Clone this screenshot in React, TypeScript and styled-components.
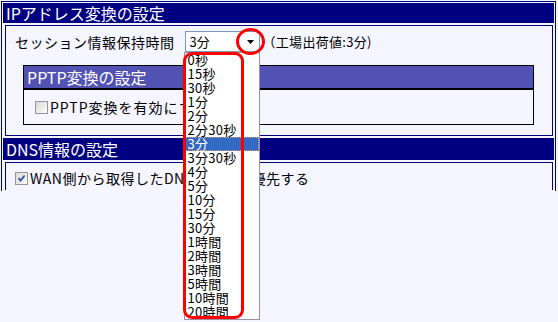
import styled, { createGlobalStyle } from "styled-components";

const GlobalStyle = createGlobalStyle`
  html, body {
    margin: 0;
    padding: 0;
    background: #f5f5ff;
  }
  body {
    font-family: "Noto Sans CJK JP", "Noto Sans", sans-serif;
    color: #000;
  }
`;

const Page = styled.div`
  width: 558px;
  height: 322px;
  overflow: hidden;
  box-sizing: border-box;
  padding: 1px 0 0 1px;
  background: #f5f5ff;
`;

const Frame = styled.div`
  width: 555px;
  height: 190px;
  box-sizing: border-box;
  border: 1px solid #000080;
  border-bottom: none;
  padding: 1px;
  display: flex;
  flex-direction: column;
  gap: 2px;
`;

const SectionTitle = styled.div<{ $h: number }>`
  height: ${(p) => p.$h}px;
  line-height: ${(p) => p.$h}px;
  background: #000080;
  color: #fff;
  font-size: 16px;
  padding-left: 3px;
  white-space: nowrap;
  flex: none;
`;

const SectionBody = styled.div<{ $open?: boolean }>`
  margin: 0 1px 0 2px;
  border: 1px solid #000080;
  border-bottom: ${(p) => (p.$open ? "none" : "1px solid #000080")};
  flex: ${(p) => (p.$open ? 1 : "none")};
  padding: ${(p) => (p.$open ? "8px 0 0 9px" : "5px 0 10px 0")};
`;

const Row = styled.div`
  display: flex;
  align-items: center;
  height: 21px;
  padding-left: 9px;
  font-size: 14px;
  letter-spacing: 0.5px;
  white-space: nowrap;
`;

const SelectWrap = styled.div`
  position: relative;
  margin-left: 10px;
  height: 21px;
`;

const Select = styled.div`
  width: 75px;
  height: 21px;
  box-sizing: border-box;
  border: 1px solid #7f9db9;
  background: #fff;
  font-size: 13px;
  letter-spacing: 0;
  line-height: 19px;
  padding: 0 5px 0 4px;
  display: flex;
  align-items: center;
  justify-content: space-between;
`;

const Note = styled.span`
  margin-left: 3px;
  font-size: 13px;
  letter-spacing: 0.3px;
`;

const DropList = styled.ul`
  position: absolute;
  top: 21px;
  left: -1px;
  width: 76px;
  height: 268px;
  box-sizing: border-box;
  margin: 0;
  padding: 0;
  list-style: none;
  background: #fff;
  border: 1px solid #9c8fa8;
  z-index: 2;
`;

const Option = styled.li<{ $selected?: boolean }>`
  height: 14px;
  line-height: 13px;
  padding: 0 0 1px 3px;
  font-size: 13px;
  letter-spacing: 0.3px;
  box-sizing: border-box;
  background: ${(p) => (p.$selected ? "#316ac5" : "transparent")};
  color: ${(p) => (p.$selected ? "#fff" : "#000")};
  outline: ${(p) => (p.$selected ? "1px dotted #e8a070" : "none")};
  outline-offset: -1px;
`;

const MarkRect = styled.div`
  position: absolute;
  left: -2px;
  top: 21px;
  width: 61px;
  height: 267px;
  box-sizing: border-box;
  border: 3px solid #ff0000;
  border-radius: 9px;
  z-index: 3;
`;

const MarkCircle = styled.div`
  position: absolute;
  left: 51px;
  top: -3px;
  width: 29px;
  height: 27px;
  box-sizing: border-box;
  border: 3px solid #ff0000;
  border-radius: 50%;
  z-index: 3;
`;

const SubBox = styled.div`
  margin: 13px 18px 0 17px;
  border: 1px solid #000;
`;

const SubTitle = styled.div`
  height: 22px;
  line-height: 22px;
  background: #5252b5;
  border-bottom: 2px solid #000;
  color: #fff;
  font-size: 16px;
  padding-left: 3px;
`;

const SubBody = styled.div`
  height: 34px;
  display: flex;
  align-items: center;
  padding-left: 11px;
`;

const CheckLine = styled.label<{ $wide?: boolean }>`
  display: flex;
  align-items: center;
  gap: 2px;
  font-size: 14px;
  letter-spacing: ${(p) => (p.$wide ? "1px" : "0.5px")};
  white-space: nowrap;
  height: 14px;
`;

const Box = styled.span`
  width: 13px;
  height: 13px;
  box-sizing: border-box;
  border: 1px solid #9a8fa6;
  background: linear-gradient(135deg, #dcdcd6 0%, #f0f0ec 70%, #ffffff 100%);
  display: inline-flex;
  align-items: center;
  justify-content: center;
  flex: none;
`;

const Check = ({ on }: { on?: boolean }) => (
  <Box>
    {on && (
      <svg width="9" height="9" viewBox="0 0 9 9">
        <path d="M1.5 4.2 L3.6 6.5 L7.6 1.5" stroke="#2f4fa8" strokeWidth="1.8" fill="none" />
      </svg>
    )}
  </Box>
);

const Arrow = () => (
  <svg width="7" height="4" viewBox="0 0 7 4">
    <polygon points="0,0 7,0 3.5,4" fill="#000" />
  </svg>
);

const options = [
  "0秒", "15秒", "30秒", "1分", "2分", "2分30秒", "3分", "3分30秒", "4分", "5分",
  "10分", "15分", "30分", "1時間", "2時間", "3時間", "5時間", "10時間", "20時間",
];

export default function App() {
  return (
    <Page>
      <GlobalStyle />
      <Frame>
        <SectionTitle $h={20}>IPアドレス変換の設定</SectionTitle>
        <SectionBody>
          <Row>
            セッション情報保持時間
            <SelectWrap>
              <Select>
                <span>3分</span>
                <Arrow />
              </Select>
              <DropList>
                {options.map((o) => (
                  <Option key={o} $selected={o === "3分"}>
                    {o}
                  </Option>
                ))}
              </DropList>
              <MarkRect />
              <MarkCircle />
            </SelectWrap>
            <Note>（工場出荷値:3分)</Note>
          </Row>
          <SubBox>
            <SubTitle>PPTP変換の設定</SubTitle>
            <SubBody>
              <CheckLine $wide>
                <Check />
                PPTP変換を有効にする
              </CheckLine>
            </SubBody>
          </SubBox>
        </SectionBody>
        <SectionTitle $h={22}>DNS情報の設定</SectionTitle>
        <SectionBody $open>
          <CheckLine>
            <Check on />
            WAN側から取得したDNSサーバを優先する
          </CheckLine>
        </SectionBody>
      </Frame>
    </Page>
  );
}
